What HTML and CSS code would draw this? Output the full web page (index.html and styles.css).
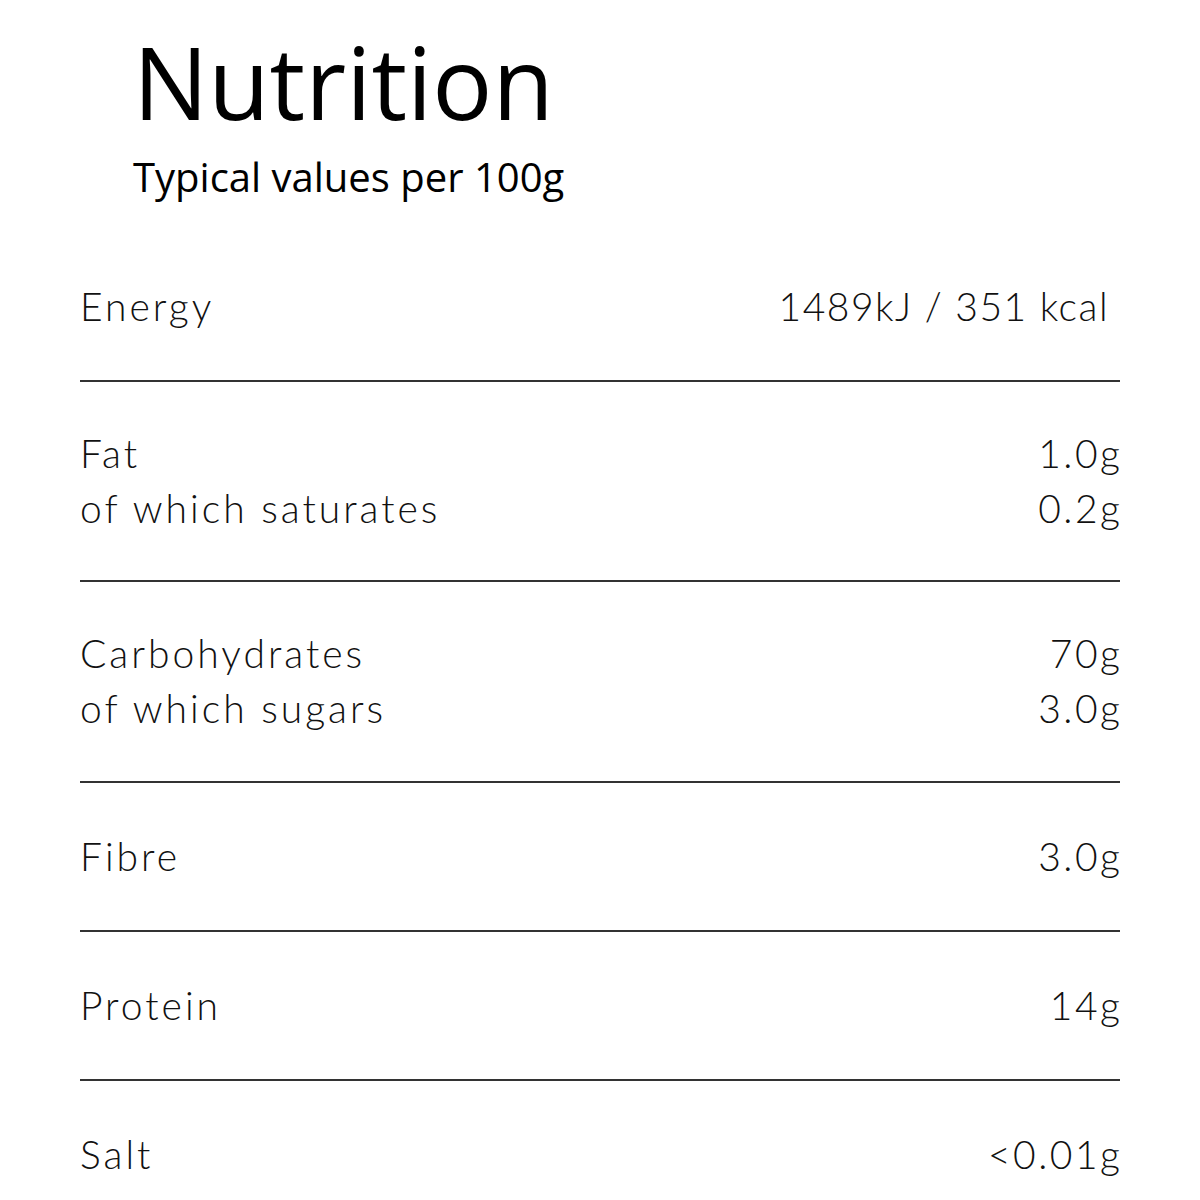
FILE: index.html
```html
<!DOCTYPE html>
<html lang="en">
<head>
    <meta charset="UTF-8">
    <meta name="viewport" content="width=device-width, initial-scale=1.0">
    <title>Nutrition</title>
    <link rel="stylesheet" href="styles.css">
</head>
<body>
    <div class="header">
        <h1 class="title">Nutrition</h1>
        <p class="subtitle">Typical values per 100g</p>
    </div>

    <div class="table">
        <div class="section">
            <div class="row"><span class="label">Energy</span><span class="value energy">1489kJ / 351 kcal</span></div>
        </div>
        <div class="section double tight">
            <div class="row"><span class="label">Fat</span><span class="value">1.0g</span></div>
            <div class="row"><span class="label">of which saturates</span><span class="value">0.2g</span></div>
        </div>
        <div class="section double">
            <div class="row"><span class="label">Carbohydrates</span><span class="value">70g</span></div>
            <div class="row"><span class="label">of which sugars</span><span class="value">3.0g</span></div>
        </div>
        <div class="section">
            <div class="row"><span class="label">Fibre</span><span class="value">3.0g</span></div>
        </div>
        <div class="section">
            <div class="row"><span class="label">Protein</span><span class="value">14g</span></div>
        </div>
        <div class="section last">
            <div class="row"><span class="label">Salt</span><span class="value">&lt;0.01g</span></div>
        </div>
    </div>
</body>
</html>
```

FILE: styles.css
```css
* {
    box-sizing: border-box;
}

body {
    margin: 0;
    background: #fff;
    color: #111;
}

.header {
    padding: 21px 0 0 133px;
    font-family: "Open Sans", sans-serif;
    color: #000;
}

.title {
    margin: 0;
    font-size: 100px;
    font-weight: 400;
    line-height: 120px;
}

.subtitle {
    margin: 8px 0 0 0;
    font-size: 40px;
    line-height: 56px;
}

.table {
    margin: 28px 80px 0 80px;
    font-family: "Lato", sans-serif;
    font-weight: 300;
    font-size: 39px;
}

.section {
    padding: 46px 0;
    border-bottom: 2px solid #333;
}

.section.double {
    padding: 44px 0 45px 0;
}

.section.double.tight {
    padding: 44px 0;
}

.section.last {
    border-bottom: none;
}

.row {
    display: flex;
    justify-content: space-between;
    line-height: 55px;
}

.label {
    letter-spacing: 3px;
}

.value {
    letter-spacing: 2.5px;
    margin-right: -2.5px;
}

.value.energy {
    letter-spacing: 1.5px;
    margin-right: 11px;
}
```
